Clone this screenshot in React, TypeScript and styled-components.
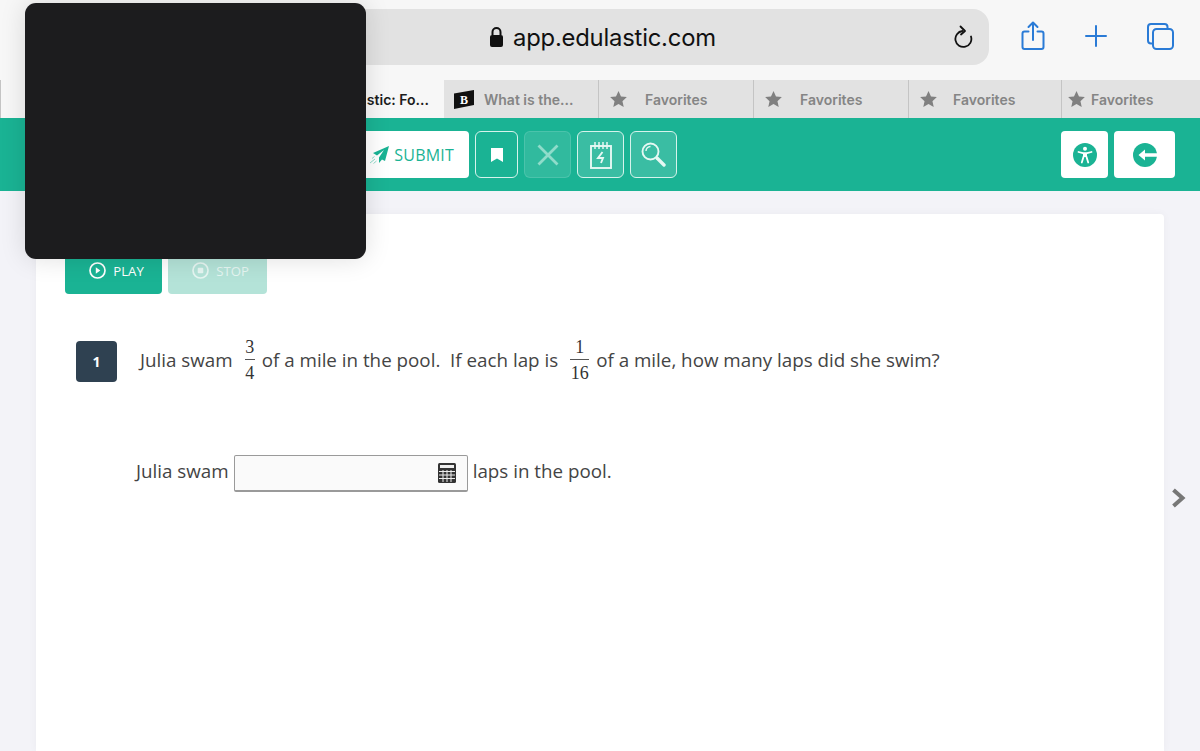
import React from "react";
import styled, { createGlobalStyle } from "styled-components";

const GlobalStyle = createGlobalStyle`
  html, body {
    margin: 0;
    padding: 0;
    height: 751px;
    overflow: hidden;
    background: #f3f3f8;
    font-family: "Open Sans", sans-serif;
  }
  * { box-sizing: border-box; }
`;

const Page = styled.div`
  position: relative;
  width: 1200px;
  height: 751px;
  overflow: hidden;
  display: flex;
  flex-direction: column;
`;

const Cover = styled.div`
  position: absolute;
  left: 25px;
  top: 3px;
  width: 341px;
  height: 256px;
  background: #1c1c1e;
  border-radius: 11px;
  box-shadow: 0 0 26px rgba(0, 0, 0, 0.13);
`;

const SafariBar = styled.div`
  height: 80px;
  flex: none;
  background: #f7f7f7;
  display: flex;
  align-items: flex-start;
  padding: 9px 0 0 300px;
`;

const UrlBar = styled.div`
  width: 689px;
  height: 56px;
  background: #e2e2e2;
  border-radius: 16px;
  display: flex;
  align-items: center;
  justify-content: space-between;
  padding: 0 15px 0 189px;
`;

const UrlText = styled.div`
  display: flex;
  align-items: center;
  gap: 9px;
  font-family: Inter, "Liberation Sans", sans-serif;
  font-size: 23.8px;
  letter-spacing: -0.2px;
  color: #111;
`;

const SafariActions = styled.div`
  display: flex;
  align-items: center;
  gap: 40px;
  margin: 12px 0 0 32px;
`;

const TabStrip = styled.div`
  height: 38px;
  flex: none;
  display: flex;
  background: #e2e2e2;
  border-left: 1px solid #c4c4c4;
`;

const Tab = styled.div<{ $w: number; $active?: boolean; $gap?: number; $pad?: number }>`
  width: ${(p) => p.$w}px;
  flex: none;
  display: flex;
  align-items: center;
  justify-content: ${(p) => (p.$active ? "flex-end" : "flex-start")};
  gap: ${(p) => p.$gap ?? 16}px;
  padding: ${(p) => (p.$active ? "0 15px 0 0" : `0 0 0 ${p.$pad ?? 11}px`)};
  background: ${(p) => (p.$active ? "#f7f7f7" : "transparent")};
  border-right: ${(p) => (p.$active ? "none" : "1px solid #c4c4c4")};
  font-family: Inter, "Liberation Sans", sans-serif;
  font-size: 14px;
  font-weight: 600;
  color: ${(p) => (p.$active ? "#1c1c1c" : "#858585")};
  white-space: nowrap;
`;

const Header = styled.div`
  height: 73px;
  flex: none;
  background: #1ab394;
  display: flex;
  align-items: flex-start;
  padding: 13px 25px 0 300px;
`;

const SubmitButton = styled.div`
  width: 169px;
  height: 47px;
  background: #fff;
  border-radius: 4px;
  display: flex;
  align-items: center;
  justify-content: flex-end;
  gap: 5px;
  padding-right: 15px;
  color: #1ab394;
  font-size: 16px;
  letter-spacing: 0.2px;
`;

const ToolButton = styled.div<{ $w?: number; $muted?: boolean; $tint?: boolean }>`
  width: ${(p) => p.$w ?? 47}px;
  height: 47px;
  margin-left: 6px;
  border-radius: 6px;
  display: flex;
  align-items: center;
  justify-content: center;
  border: 1.5px solid ${(p) => (p.$muted ? "rgba(255,255,255,0.13)" : "#d6f3ec")};
  background: ${(p) => (p.$muted ? "rgba(255,255,255,0.1)" : p.$tint ? "rgba(255,255,255,0.14)" : "transparent")};
`;

const HeaderSpacer = styled.div`
  flex: 1;
`;

const WhiteButton = styled.div<{ $w: number }>`
  width: ${(p) => p.$w}px;
  height: 47px;
  margin-left: 6px;
  background: #fff;
  border-radius: 4px;
  display: flex;
  align-items: center;
  justify-content: center;
`;

const Body = styled.div`
  flex: 1;
  display: flex;
  padding: 23px 36px 0;
  position: relative;
`;

const Card = styled.div`
  flex: 1;
  background: #fff;
  border-radius: 4px 4px 0 0;
  padding: 0 40px 0 29px;
  box-shadow: 0 0 8px rgba(0, 0, 0, 0.04);
`;

const AudioRow = styled.div`
  display: flex;
  gap: 6px;
  height: 80px;
  align-items: flex-end;
`;

const AudioButton = styled.div<{ $off?: boolean }>`
  width: ${(p) => (p.$off ? 99 : 97)}px;
  height: 40px;
  border-radius: 0 0 4px 4px;
  background: ${(p) => (p.$off ? "#b4e3d8" : "#1ab394")};
  color: ${(p) => (p.$off ? "#e6f6f2" : "#fff")};
  display: flex;
  align-items: flex-start;
  justify-content: center;
  gap: 7px;
  padding: 8px 0 0 6px;
  font-size: 13.2px;
  line-height: 18px;
`;

const QuestionRow = styled.div`
  display: flex;
  align-items: center;
  margin: 44px 0 0 11px;
  height: 46px;
`;

const QuestionBadge = styled.div`
  width: 41px;
  height: 41px;
  border-radius: 4px;
  background: #2f4151;
  color: #fff;
  font-size: 14px;
  font-weight: 700;
  display: flex;
  align-items: center;
  justify-content: center;
  margin-right: 23px;
`;

const Prose = styled.div`
  display: flex;
  align-items: center;
  font-size: 18.8px;
  color: #444;
  white-space: pre;
`;

const QuestionText = styled(Prose)`
  margin-bottom: 2px;
`;

const Fraction = styled.span<{ $w: number }>`
  display: inline-flex;
  flex-direction: column;
  align-items: center;
  width: ${(p) => p.$w}px;
  margin: 0 7px 0 12px;
  font-family: "Liberation Serif", serif;
  font-size: 18px;
  line-height: 22px;
  color: #333;
`;

const FractionTop = styled.span`
  width: 100%;
  text-align: center;
  border-bottom: 1px solid #555;
  padding-bottom: 1px;
  margin-bottom: 2px;
`;

const AnswerRow = styled(Prose)`
  margin: 68px 0 0 71px;
  height: 38px;
`;

const AnswerInput = styled.div`
  width: 234px;
  height: 37px;
  margin: 4px 5px 0 5px;
  border: 1px solid #9a9a9a;
  border-bottom-width: 2px;
  border-radius: 2px;
  background: #fafafa;
  display: flex;
  align-items: center;
  justify-content: flex-end;
  padding-right: 11px;
`;

const NextArrow = styled.svg`
  position: absolute;
  left: 1171px;
  top: 297px;
`;

const Lock = () => (
  <svg width="15" height="22" viewBox="0 0 15 22">
    <path d="M3.5 9V6a4 4 0 0 1 8 0v3" fill="none" stroke="#111" strokeWidth="2" />
    <rect x="1" y="9" width="13" height="12" rx="2" fill="#111" />
  </svg>
);

const Reload = () => (
  <svg width="20" height="24" viewBox="0 0 20 24" fill="none" stroke="#111" strokeWidth="1.8" strokeLinecap="round">
    <path d="M8.500 6A8 8 0 1 0 17 11.500" />
    <path d="M6.500 1.500L11 6 7 9.500" strokeLinejoin="round" />
  </svg>
);

const Share = () => (
  <svg width="24" height="30" viewBox="0 0 24 30" fill="none" stroke="#2a7bd6" strokeWidth="2" strokeLinecap="round" strokeLinejoin="round">
    <path d="M7.500 10.500H3.500a2 2 0 0 0-2 2V26a2 2 0 0 0 2 2h17a2 2 0 0 0 2-2V12.500a2 2 0 0 0-2-2h-4" />
    <path d="M12 19V2M7.500 6L12 1.500 16.500 6" />
  </svg>
);

const Plus = () => (
  <svg width="22" height="22" viewBox="0 0 22 22" stroke="#2a7bd6" strokeWidth="2" strokeLinecap="round">
    <path d="M11 1v20M1 11h20" />
  </svg>
);

const Tabs = () => (
  <svg width="27" height="27" viewBox="0 0 27 27" fill="none" stroke="#2a7bd6" strokeWidth="2">
    <path d="M5 20.500H4a3 3 0 0 1-3-3V4a3 3 0 0 1 3-3h13.500a3 3 0 0 1 3 3v2" />
    <rect x="6" y="6" width="20" height="20" rx="3.500" />
  </svg>
);

const Star = () => (
  <svg width="17" height="16" viewBox="0 0 24 23" fill="#808080">
    <path d="M12 0l3.600 8 8.400.8-6.300 5.800 1.800 8.400L12 18.600 4.500 23l1.800-8.400L0 8.800 8.400 8z" />
  </svg>
);

const SiteMark = () => (
  <svg width="20" height="19" viewBox="0 0 20 19">
    <path d="M0 3.500L20 0v15L0 19z" fill="#111" />
    <text x="10" y="14" textAnchor="middle" fontFamily="Liberation Serif" fontWeight="700" fontSize="12" fill="#fff">B</text>
  </svg>
);

const Paper = () => (
  <svg width="19" height="18" viewBox="0 0 19 18" fill="#1ab394">
    <path d="M19 0L3 7l4 2.500L14 4 9 11.500V17l3-3.500 3 1.500z" />
    <path d="M0 17l5-4M2 12.500l2.500-2M3.500 17.500l3-2.500" stroke="#8fdcca" strokeWidth="1" fill="none" />
  </svg>
);

const Bookmark = () => (
  <svg width="12" height="14" viewBox="0 0 12 14" fill="#fff">
    <path d="M0 0h12v14L6 10.500 0 14z" />
  </svg>
);

const Cross = () => (
  <svg width="22" height="22" viewBox="0 0 22 22" stroke="#8fdcca" strokeWidth="2.800">
    <path d="M1.500 1.500l19 19M20.500 1.500l-19 19" />
  </svg>
);

const Scratch = () => (
  <svg width="24" height="28" viewBox="0 0 24 28" fill="none" stroke="#e6f8f3" strokeWidth="1.900">
    <rect x="2" y="5" width="20" height="22" />
    <path d="M6 1v7M10 1v7M14 1v7M18 1v7" strokeWidth="1.500" />
    <path d="M13.500 11l-4.500 6h5l-2 5" />
  </svg>
);

const Magnifier = () => (
  <svg width="25" height="25" viewBox="0 0 25 25" fill="none" stroke="#e6f8f3">
    <circle cx="9.500" cy="9.500" r="8" strokeWidth="1.900" />
    <path d="M5 9a4.500 4.500 0 0 1 4.500-4.500" strokeWidth="1.400" />
    <path d="M16 16l7 7" strokeWidth="3.400" strokeLinecap="round" />
  </svg>
);

const Accessibility = () => (
  <svg width="24" height="24" viewBox="0 0 24 24">
    <circle cx="12" cy="12" r="12" fill="#1ab394" />
    <circle cx="12" cy="5.800" r="2" fill="#fff" />
    <path d="M5.500 9l4.500 1.200h4L18.500 9" fill="none" stroke="#fff" strokeWidth="1.800" strokeLinecap="round" strokeLinejoin="round" />
    <path d="M10 10v4h4v-4z" fill="#fff" />
    <path d="M10.600 13.500L8.800 19.500M13.400 13.500l1.800 6" fill="none" stroke="#fff" strokeWidth="1.800" strokeLinecap="round" />
  </svg>
);

const Exit = () => (
  <svg width="24" height="24" viewBox="0 0 24 24">
    <circle cx="12" cy="12" r="12" fill="#1ab394" />
    <path d="M24 10.200H12V6.500L5.500 12l6.500 5.500v-3.700h12z" fill="#fff" />
  </svg>
);

const PlayIcon = () => (
  <svg width="17" height="17" viewBox="0 0 17 17" fill="none" stroke="#fff" strokeWidth="1.700">
    <circle cx="8.500" cy="8.500" r="7.500" />
    <path d="M6.800 5.300l4.500 3.200-4.500 3.200z" fill="#fff" stroke="none" />
  </svg>
);

const StopIcon = () => (
  <svg width="17" height="17" viewBox="0 0 17 17" fill="none" stroke="#e6f6f2" strokeWidth="1.700">
    <circle cx="8.500" cy="8.500" r="7.500" />
    <rect x="5.700" y="5.700" width="5.600" height="5.600" rx="1" fill="#e6f6f2" stroke="none" />
  </svg>
);

const Calculator = () => (
  <svg width="18" height="20" viewBox="0 0 18 20">
    <rect width="18" height="20" rx="1.500" fill="#333" />
    <rect x="2" y="2" width="14" height="3" fill="#eee" />
    <path d="M1 8.500h16M1 12h16M1 15.500h16M5 7v12M9 7v12M13 7v12" stroke="#eee" strokeWidth="1" />
  </svg>
);

const App = () => {
  return (
    <Page>
      <GlobalStyle />
      <SafariBar>
        <UrlBar>
          <UrlText>
            <Lock />
            app.edulastic.com
          </UrlText>
          <Reload />
        </UrlBar>
        <SafariActions>
          <Share />
          <Plus />
          <Tabs />
        </SafariActions>
      </SafariBar>
      <TabStrip>
        <Tab $w={443} $active>stic: Fo...</Tab>
        <Tab $w={155} $gap={10} $pad={10}>
          <SiteMark />
          What is the...
        </Tab>
        <Tab $w={155} $gap={18}><Star />Favorites</Tab>
        <Tab $w={155} $gap={18}><Star />Favorites</Tab>
        <Tab $w={153} $gap={16}><Star />Favorites</Tab>
        <Tab $w={139} $gap={6} $pad={6}><Star />Favorites</Tab>
      </TabStrip>
      <Header>
        <SubmitButton>
          <Paper />
          SUBMIT
        </SubmitButton>
        <ToolButton $w={43}><Bookmark /></ToolButton>
        <ToolButton $muted><Cross /></ToolButton>
        <ToolButton $tint><Scratch /></ToolButton>
        <ToolButton $tint><Magnifier /></ToolButton>
        <HeaderSpacer />
        <WhiteButton $w={47}><Accessibility /></WhiteButton>
        <WhiteButton $w={61}><Exit /></WhiteButton>
      </Header>
      <Body>
        <Card>
          <AudioRow>
            <AudioButton><PlayIcon />PLAY</AudioButton>
            <AudioButton $off><StopIcon />STOP</AudioButton>
          </AudioRow>
          <QuestionRow>
            <QuestionBadge>1</QuestionBadge>
            <QuestionText>
              Julia swam
              <Fraction $w={10}>
                <FractionTop>3</FractionTop>
                4
              </Fraction>
              of a mile in the pool.  If each lap is
              <Fraction $w={19}>
                <FractionTop>1</FractionTop>
                16
              </Fraction>
              of a mile, how many laps did she swim?
            </QuestionText>
          </QuestionRow>
          <AnswerRow>
            Julia swam
            <AnswerInput><Calculator /></AnswerInput>
            laps in the pool.
          </AnswerRow>
        </Card>
        <NextArrow width="15" height="20" viewBox="0 0 15 20" fill="none" stroke="#777" strokeWidth="4">
          <path d="M2.500 2l9 8-9 8" />
        </NextArrow>
      </Body>
      <Cover />
    </Page>
  );
};

export default App;
